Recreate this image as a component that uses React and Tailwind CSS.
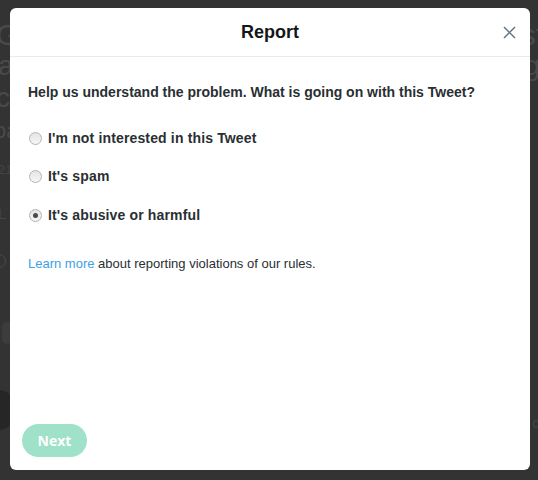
import { useState } from 'react'

const OPTIONS = [
  "I'm not interested in this Tweet",
  "It's spam",
  "It's abusive or harmful",
]

function Radio({ checked }) {
  return (
    <span className="flex h-[13px] w-[13px] shrink-0 items-center justify-center rounded-full border border-[#b4b4b4] bg-gradient-to-b from-[#e4e4e4] to-[#f6f6f6]">
      {checked && <span className="h-[5px] w-[5px] rounded-full bg-[#4a4a4a]" />}
    </span>
  )
}

// dimmed timeline peeking out behind the dialog
function Backdrop() {
  return (
    <div className="flex h-full flex-col font-['Liberation_Sans',Arial,sans-serif] leading-none text-[#4a4a4a]">
      <div className="mt-[20px] flex h-[32px] justify-between text-[30px]">
        <span className="-ml-[4px]">G</span>
        <span className="-mr-[6px]">st</span>
      </div>
      <div className="flex h-[32px] justify-between text-[28px]">
        <span className="-ml-[2px]">a</span>
        <span className="-mr-[2px]">g</span>
      </div>
      <div className="flex h-[36px] text-[28px]">
        <span className="-ml-[4px]">c</span>
      </div>
      <div className="flex h-[43px] text-[22px]">
        <span className="-ml-[6px]">oa</span>
      </div>
      <div className="flex h-[43px] text-[13px] text-[#444]">
        <span className="-ml-[2px]">21</span>
      </div>
      <div className="flex h-[48px] text-[15px] text-[#444]">
        <span className="-ml-[2px]">L</span>
      </div>
      <div className="flex h-[68px]">
        <span className="-ml-[8px] h-[14px] w-[14px] rounded-full border border-[#4a4a4a]" />
      </div>
      <div className="flex h-[62px]">
        <span className="ml-[2px] h-[22px] w-[10px] rounded-full bg-[#3c3c3c]" />
      </div>
      <div className="flex h-[46px] items-end justify-between">
        <span className="-ml-[16px] h-[40px] w-[30px] rounded-full bg-[#262626]" />
        <span className="-mr-[2px] text-[14px] text-[#444]">d</span>
      </div>
      <div className="ml-[50px] mt-[4px] flex gap-[64px]">
        <span className="h-[8px] w-[12px] rotate-45 border border-[#4a4a4a]" />
        <span className="h-[8px] w-[14px] border border-[#4a4a4a]" />
        <span className="h-[10px] w-[10px] rotate-45 border border-[#4a4a4a]" />
        <span className="h-[10px] w-[14px] border border-[#4a4a4a]" />
      </div>
    </div>
  )
}

export default function App() {
  const [choice, setChoice] = useState(2)

  return (
    <div className="relative h-[480px] w-[538px] overflow-hidden bg-[#333333]">
      <Backdrop />

      {/* Dialog */}
      <div className="absolute left-[10px] top-[8px] flex h-[462px] w-[520px] flex-col rounded-[6px] bg-white font-['Liberation_Sans',Arial,sans-serif] text-[#14171a]">
        <div className="flex h-[49px] shrink-0 items-center border-b border-[#e6ecf0] pl-[28px] pr-[14px]">
          <h1 className="flex-1 text-center text-[18px] font-bold leading-none">Report</h1>
          <button className="flex h-[14px] w-[14px] items-center justify-center text-[#657786]">
            <svg width="13" height="13" viewBox="0 0 13 13" fill="none" stroke="currentColor" strokeWidth="1.5">
              <path d="M1 1l11 11M12 1L1 12" />
            </svg>
          </button>
        </div>

        <div className="flex flex-1 flex-col px-[18px] pt-[26px]">
          <p className="text-[14px] font-bold leading-[18px] text-[#292f33]">
            Help us understand the problem. What is going on with this Tweet?
          </p>

          <div className="mt-[28px] flex flex-col gap-[20.5px]">
            {OPTIONS.map((label, i) => (
              <label
                key={label}
                onClick={() => setChoice(i)}
                className="flex h-[18px] cursor-pointer items-center gap-[6px] pl-[1px] text-[14px] font-bold tracking-[0.15px] text-[#292f33]"
              >
                <Radio checked={choice === i} />
                <span>{label}</span>
              </label>
            ))}
          </div>

          <p className="mt-[31px] text-[13px] leading-[18px] text-[#292f33]">
            <a className="text-[#3ba1e6]">Learn more</a> about reporting violations of our rules.
          </p>

          <div className="mt-auto pb-[13px]">
            <button className="-ml-[6px] h-[33px] w-[65px] rounded-full bg-[#9fe2c9] font-['Open_Sans',sans-serif] text-[14px] font-bold text-white">
              Next
            </button>
          </div>
        </div>
      </div>
    </div>
  )
}
